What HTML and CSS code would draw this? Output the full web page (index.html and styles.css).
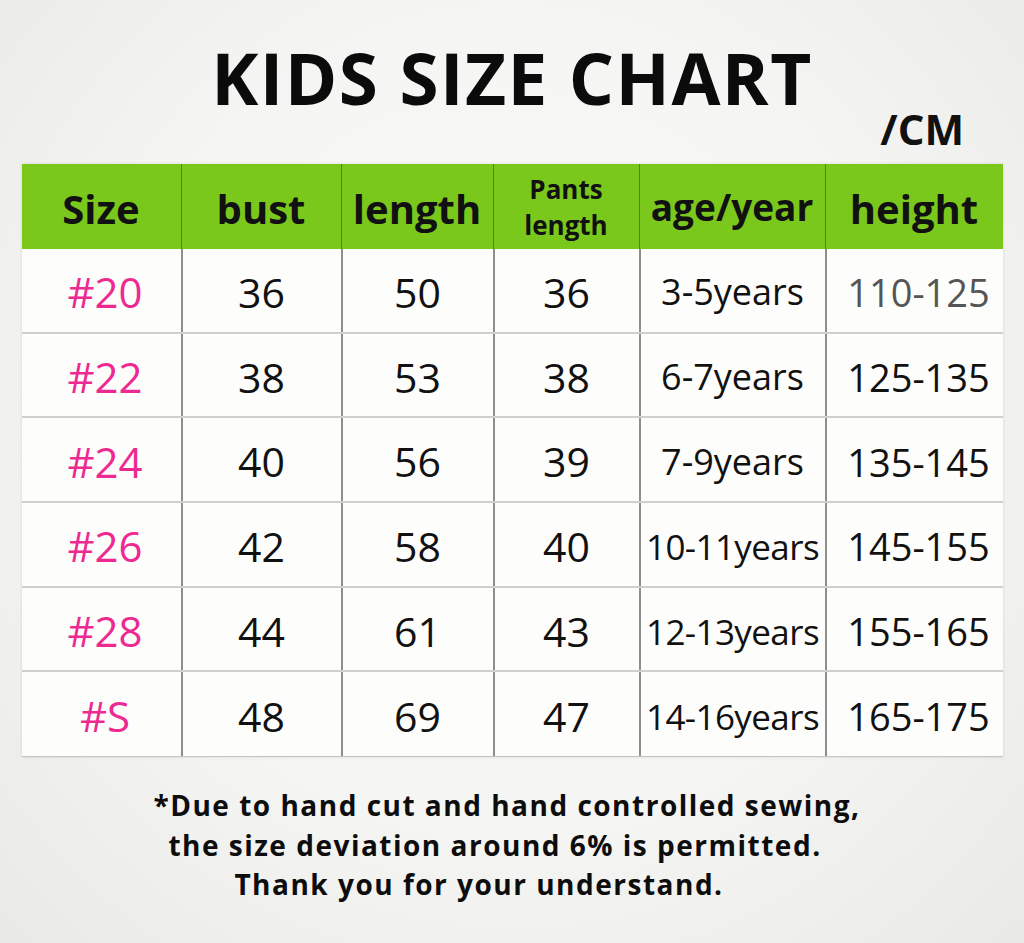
FILE: index.html
```html
<!DOCTYPE html>
<html>
<head>
<meta charset="utf-8">
<link rel="stylesheet" href="styles.css">
</head>
<body>
<main class="page">
  <h1 class="title">KIDS SIZE CHART</h1>
  <div class="unit">/CM</div>
  <div class="chart">
    <div class="row head">
      <div class="cell">Size</div>
      <div class="cell">bust</div>
      <div class="cell">length</div>
      <div class="cell small">Pants<br>length</div>
      <div class="cell agehead">age/year</div>
      <div class="cell">height</div>
    </div>
    <div class="row">
      <div class="cell size">#20</div><div class="cell">36</div><div class="cell">50</div><div class="cell">36</div><div class="cell age">3-5years</div><div class="cell ht grey">110-125</div>
    </div>
    <div class="row">
      <div class="cell size">#22</div><div class="cell">38</div><div class="cell">53</div><div class="cell">38</div><div class="cell age">6-7years</div><div class="cell ht">125-135</div>
    </div>
    <div class="row">
      <div class="cell size">#24</div><div class="cell">40</div><div class="cell">56</div><div class="cell">39</div><div class="cell age">7-9years</div><div class="cell ht">135-145</div>
    </div>
    <div class="row">
      <div class="cell size">#26</div><div class="cell">42</div><div class="cell">58</div><div class="cell">40</div><div class="cell age narrow">10-11years</div><div class="cell ht">145-155</div>
    </div>
    <div class="row">
      <div class="cell size">#28</div><div class="cell">44</div><div class="cell">61</div><div class="cell">43</div><div class="cell age narrow">12-13years</div><div class="cell ht">155-165</div>
    </div>
    <div class="row">
      <div class="cell size">#S</div><div class="cell">48</div><div class="cell">69</div><div class="cell">47</div><div class="cell age narrow">14-16years</div><div class="cell ht">165-175</div>
    </div>
  </div>
  <p class="note">
    <span class="line l1">*Due to hand cut and hand controlled sewing,</span>
    <span class="line l2">the size deviation around 6% is permitted.</span>
    <span class="line l3">Thank you for your understand.</span>
  </p>
</main>
</body>
</html>
```
FILE: styles.css
```css
html, body {
  margin: 0;
  padding: 0;
}
body {
  width: 1024px;
  height: 943px;
  overflow: hidden;
  background: radial-gradient(ellipse at 50% 45%, #fafaf8 0%, #f5f5f3 55%, #e9e9e7 100%);
  font-family: "Open Sans", "DejaVu Sans", sans-serif;
  color: #111;
}
.page {
  display: flex;
  flex-direction: column;
  align-items: center;
  padding-top: 33px;
}
.title {
  margin: 0;
  font-size: 71px;
  font-weight: 700;
  line-height: 90px;
  letter-spacing: 1.5px;
  color: #0b0b0b;
}
.unit {
  align-self: flex-end;
  margin-right: 60px;
  margin-top: -19px;
  font-size: 42px;
  font-weight: 700;
  line-height: 50px;
}
.chart {
  margin-top: 10px;
  width: 981px;
  display: flex;
  flex-direction: column;
  box-shadow: 0 0 3px rgba(0,0,0,0.12);
  background: #fdfdfc;
}
.row {
  box-sizing: border-box;
  display: grid;
  grid-template-columns: 159px 160px 152px 146px 186px 178px;
  height: 84.7px;
  border-bottom: 2px solid #cfcfcd;
}
.row:last-child {
  border-bottom: 1px solid #c4c4c2;
}
.cell {
  display: flex;
  align-items: center;
  justify-content: center;
  font-size: 41px;
  line-height: 1;
  padding-top: 4px;
  border-left: 2px solid #8e8e8c;
  white-space: nowrap;
  color: #111;
}
.cell:first-child {
  border-left: none;
}
.head {
  background: #7bc81d;
  height: 85px;
  border-bottom: none;
}
.head .cell {
  font-weight: 700;
  font-size: 40px;
  border-left-color: #4f8a10;
  border-left-width: 1px;
  padding-top: 4px;
}
.head .cell.agehead {
  font-size: 37px;
  padding-top: 0;
}
.head .cell.small {
  font-size: 26px;
  line-height: 36px;
  text-align: center;
  padding-top: 0;
}
.size {
  color: #ee2a92;
  font-size: 42px;
  padding-left: 8px;
}
.age {
  font-size: 36px;
}
.age.narrow {
  font-size: 35px;
  letter-spacing: -0.6px;
}
.ht {
  font-size: 38px;
  padding-left: 8px;
}
.grey {
  color: #555;
}
.note {
  margin: 29px 0 0;
  display: flex;
  flex-direction: column;
  align-items: center;
  font-size: 28px;
  font-weight: 700;
  line-height: 39.5px;
  letter-spacing: 1.5px;
  color: #0d0d0d;
}
.line {
  white-space: nowrap;
}
.l1 {
  margin-right: 10px;
}
.l2 {
  margin-right: 34px;
}
.l3 {
  margin-right: 66px;
}
```
